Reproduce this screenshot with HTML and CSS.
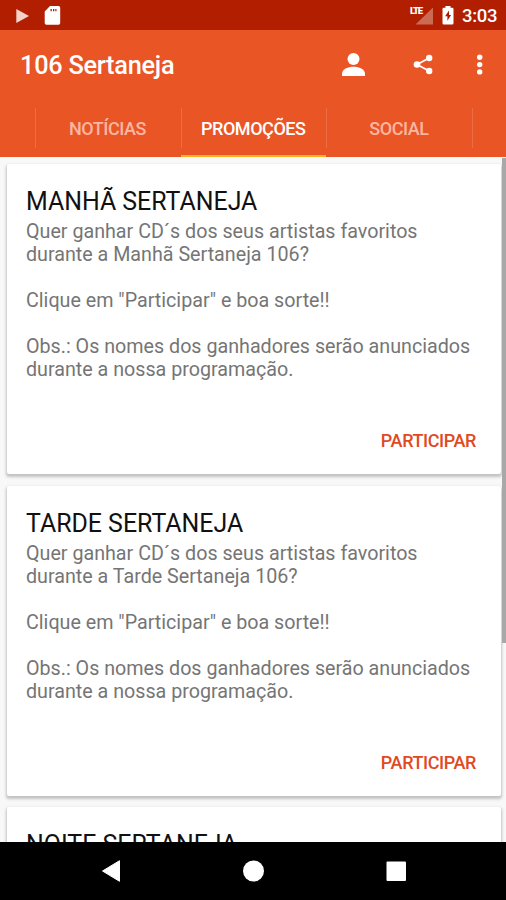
FILE: index.html
```html
<!DOCTYPE html>
<html lang="pt-BR">
<head>
<meta charset="utf-8">
<title>106 Sertaneja</title>
<link rel="stylesheet" href="styles.css">
</head>
<body>
<div class="screen">
  <div class="status">
    <svg class="status-left" width="80" height="30" viewBox="0 0 80 30">
      <path d="M16.3 9v14L29 16z" fill="#f3d3c8"/>
      <path fill-rule="evenodd" d="M50 6h8.500q1.700 0 1.700 1.700v15.400q0 1.700-1.700 1.700H46.400q-1.700 0-1.700-1.700V11.500zM50.500 9v2.200h1.300V9zM53 9v2.200h1.300V9zM55.300 9v2.200h1.200V9z" fill="#fff"/>
    </svg>
    <span class="lte">LTE</span>
    <svg class="status-right" width="50" height="30" viewBox="0 0 50 30">
      <path d="M27 7.500V24.500H9.500z" fill="#cc6b54"/>
      <path d="M39.500 6h5v1.800h1.700q1.300 0 1.300 1.300v14.100q0 1.300-1.300 1.300h-8.400q-1.300 0-1.300-1.300V9.100q0-1.300 1.300-1.300h1.700z" fill="#fff"/>
      <path d="M43 10.500l-3.900 5.700h2.300v4.500l3.700-5.700h-2.100z" fill="#a91b00"/>
    </svg>
    <span class="clock">3:03</span>
  </div>
  <header class="appbar">
    <h1 class="app-title">106 Sertaneja</h1>
    <svg class="actions" width="180" height="72" viewBox="0 0 180 72">
      <g fill="#fff">
        <circle cx="27.500" cy="29" r="6"/>
        <path d="M16 46v-2.200c0-4.400 6-7 11.500-7s11.500 2.600 11.500 7V46z"/>
        <circle cx="91" cy="34.500" r="3.300"/>
        <circle cx="103.200" cy="28" r="3.200"/>
        <circle cx="103.200" cy="41" r="3.200"/>
        <circle cx="153.700" cy="27.300" r="2.700"/>
        <circle cx="153.700" cy="34.600" r="2.700"/>
        <circle cx="153.700" cy="41.900" r="2.700"/>
      </g>
      <path d="M103.200 28L91 34.500l12.200 6.500" fill="none" stroke="#fff" stroke-width="1.800"/>
    </svg>
  </header>
  <nav class="tabs">
    <div class="tab">NOTÍCIAS</div>
    <div class="tab active">PROMOÇÕES</div>
    <div class="tab">SOCIAL</div>
    <div class="tab-rest"></div>
  </nav>
  <main class="list">
    <article class="card">
      <h2 class="heading">MANHÃ SERTANEJA</h2>
      <p class="text">Quer ganhar CD´s dos seus artistas favoritos<br>durante a Manhã Sertaneja 106?<br><br>Clique em "Participar" e boa sorte!!<br><br>Obs.: Os nomes dos ganhadores serão anunciados<br>durante a nossa programação.</p>
      <a class="join">PARTICIPAR</a>
    </article>
    <article class="card">
      <h2 class="heading">TARDE SERTANEJA</h2>
      <p class="text">Quer ganhar CD´s dos seus artistas favoritos<br>durante a Tarde Sertaneja 106?<br><br>Clique em "Participar" e boa sorte!!<br><br>Obs.: Os nomes dos ganhadores serão anunciados<br>durante a nossa programação.</p>
      <a class="join">PARTICIPAR</a>
    </article>
    <article class="card">
      <h2 class="heading">NOITE SERTANEJA</h2>
    </article>
    <div class="scrollbar"></div>
  </main>
  <footer class="navbar">
    <svg width="506" height="58" viewBox="0 0 506 58">
      <path d="M102.500 29L119.500 18.700V39.300z" fill="#fff" stroke="#fff" stroke-linejoin="round"/>
      <circle cx="253.500" cy="29" r="10.500" fill="#fff"/>
      <rect x="386.500" y="19.500" width="19.500" height="19.500" rx="1" fill="#fff"/>
    </svg>
  </footer>
</div>
</body>
</html>
```
FILE: styles.css
```css
* { box-sizing: border-box; }
body { margin: 0; font-family: Roboto, "Liberation Sans", sans-serif; }
h1, h2, p { margin: 0; font-weight: 400; white-space: nowrap; }
svg { display: block; flex: none; }

.screen {
  width: 506px;
  height: 900px;
  display: flex;
  flex-direction: column;
  overflow: hidden;
  background: #f8f8f8;
}

.status {
  flex: none;
  height: 30px;
  display: flex;
  align-items: center;
  background: #b21e00;
  color: #fff;
}
.status-left { margin-right: 330px; }
.lte {
  width: 14px;
  margin-right: -14px;
  margin-top: -9px;
  font-size: 9.500px;
  line-height: 10px;
  font-weight: 900;
  letter-spacing: -1.200px;
}
.status-right { margin-left: -4px; }
.clock {
  margin-left: 6px;
  margin-top: 2px;
  font-size: 18.500px;
  line-height: 22px;
  font-weight: 500;
  letter-spacing: -0.3px;
}

.appbar {
  flex: none;
  height: 72px;
  display: flex;
  align-items: center;
  justify-content: space-between;
  padding-left: 20px;
  background: #ea5526;
  color: #fff;
}
.app-title {
  font-size: 25.300px;
  line-height: 30px;
  font-weight: 500;
  letter-spacing: -0.250px;
}

.tabs {
  flex: none;
  height: 55px;
  display: grid;
  grid-template-columns: 146px 145.500px 146px 34px;
  padding-left: 34.500px;
  background: #ea5526;
}
.tab, .tab-rest {
  background: linear-gradient(#ef6d46, #ef6d46) 0 6px / 1px 40px no-repeat;
}
.tab {
  display: flex;
  justify-content: center;
  padding-top: 16px;
  color: #f9b7a2;
  font-size: 18px;
  line-height: 22px;
  font-weight: 500;
  letter-spacing: -0.450px;
}
.tab.active {
  color: #fff;
  box-shadow: inset 0 -2px #ffb41f;
}

.list {
  flex: 1;
  min-height: 0;
  position: relative;
  display: flex;
  flex-direction: column;
  gap: 11.500px;
  padding: 7px 5px 0 7px;
  overflow: hidden;
}
.card {
  flex: none;
  height: 310px;
  display: flex;
  flex-direction: column;
  padding: 23px 25px 0 19px;
  border-radius: 2px;
  background: #fff;
  box-shadow: 0 2px 3px 1px rgba(0, 0, 0, 0.22);
}
.heading {
  color: #111;
  font-size: 24.900px;
  line-height: 30px;
}
.text {
  margin-top: 3px;
  color: #757575;
  font-size: 19.700px;
  line-height: 23px;
}
.join {
  align-self: flex-end;
  margin-top: 49px;
  color: #e04a22;
  font-size: 18px;
  line-height: 22px;
  font-weight: 500;
  letter-spacing: -0.400px;
}
.scrollbar {
  position: absolute;
  top: 1px;
  right: 0;
  width: 4px;
  height: 485px;
  background: #a8a8a8;
}
.navbar {
  flex: none;
  height: 58px;
  background: #000;
}
```
